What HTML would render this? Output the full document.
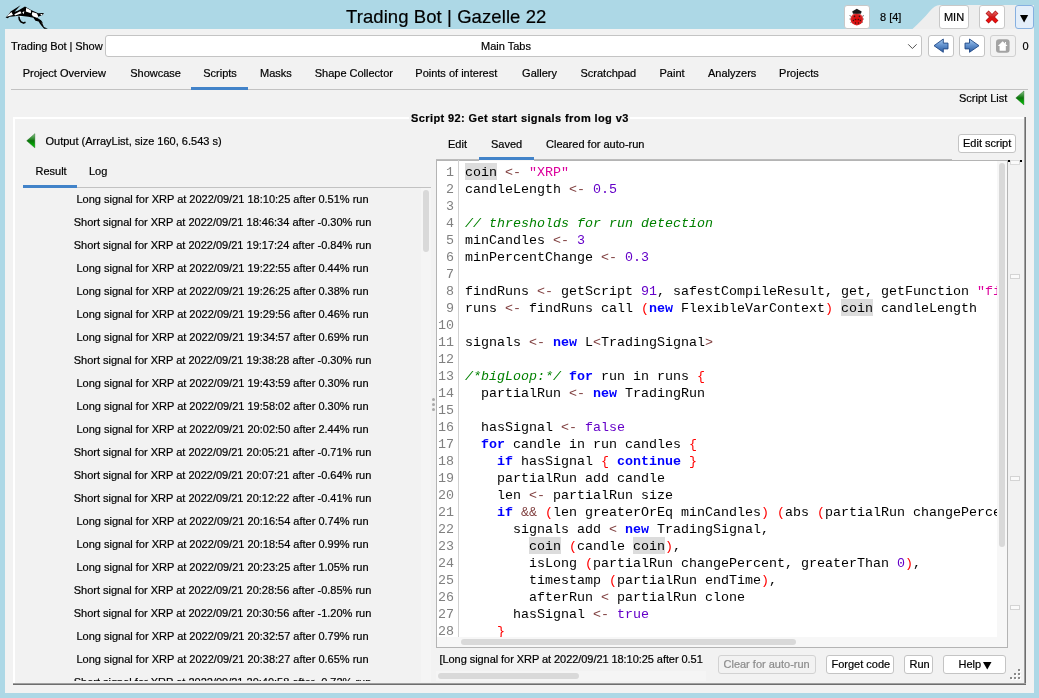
<!DOCTYPE html>
<html><head><meta charset="utf-8"><style>
html,body{margin:0;padding:0;}
body{width:1039px;height:698px;overflow:hidden;position:relative;background:#ADD8E6;font-family:"Liberation Sans",sans-serif;}
body div{position:absolute;}
.t{white-space:pre;-webkit-text-stroke:0.2px currentColor;}
#root{left:0;top:0;width:1039px;height:698px;overflow:hidden;will-change:transform;}
.code{font-family:"Liberation Mono",monospace;font-size:13.333px;line-height:17px;white-space:pre;color:#000;}
.code b{font-weight:700;}
.ln{color:#808080;}

</style></head><body><div id="root">
<svg style="position:absolute;left:3px;top:3px" width="48" height="28" viewBox="0 0 1039 606">
<path d="M56 313 L126 246 L165 182 L380 46 L250 190 L320 168 L476 74 L606 150 L762 222 L885 216 L860 260 L788 286 L762 300 L745 323 L762 338 L823 375 L851 409 L866 470 L886 522 L972 556 L890 556 L838 500 L800 450 L771 400 L702 383 L658 320 L550 298 L420 282 L335 276 L216 290 L140 300 L104 328 Z" fill="#000"/>
<path d="M345 290 Q345 370 385 405 L445 435 L488 418" stroke="#000" stroke-width="34" fill="none" stroke-linejoin="round"/>
<path d="M74 298 L182 197 L216 261 L134 283 Z M246 246 L372 179 L402 223 L261 268 Z M417 201 L462 179 L447 246 Z M503 104 L606 161 L602 222 L494 182 Z M636 195 L736 225 L762 286 L745 323 L645 286 L623 251 Z M805 238 L860 238 L834 277 Z M823 418 L866 470 L850 440 Z M350 298 L402 283 L387 313 Z" fill="#fff"/>
</svg>
<div class="t" style="left:346px;top:8px;font-size:18.5px;line-height:18.5px;color:#000;letter-spacing:0.08px;">Trading Bot | Gazelle 22</div>
<div style="left:844px;top:5px;width:26px;height:24px;background:#fff;border:1px solid #c8c8c8;border-radius:3px;box-sizing:border-box;"></div>
<svg style="position:absolute;left:843px;top:3px" width="30" height="28" viewBox="843 3 30 28">
<defs><radialGradient id="gl" cx="0.5" cy="0.55" r="0.6"><stop offset="0" stop-color="#e00000"/><stop offset="0.7" stop-color="#d82020"/><stop offset="1" stop-color="#f08080"/></radialGradient></defs>
<path d="M849.5 15.5 L851.5 16.5 M849.5 19 L851.5 19 M850.5 22.5 L852 21.5 M864 15.5 L862 16.5 M864 19 L862 19 M863 22.5 L861.5 21.5" stroke="#666" stroke-width="0.9"/>
<ellipse cx="856.8" cy="19.2" rx="6.3" ry="6.2" fill="url(#gl)"/>
<path d="M852.2 11.6 L856.8 8.8 L861.7 11.6 L860.9 13.8 L853 13.8 Z" fill="#1a1a1a"/>
<g fill="#3a1010"><circle cx="854.5" cy="16.4" r="0.8"/><circle cx="859.4" cy="16.4" r="0.8"/><circle cx="855.5" cy="19.5" r="0.8"/><circle cx="858.4" cy="19.5" r="0.8"/><circle cx="853.4" cy="20.5" r="0.7"/><circle cx="860.4" cy="20.5" r="0.7"/><circle cx="855.5" cy="23" r="0.7"/><circle cx="858.4" cy="23" r="0.7"/></g>
</svg>
<div class="t" style="left:880px;top:12px;font-size:11px;line-height:11px;color:#000;">8 [4]</div>
<svg style="position:absolute;left:0;top:0" width="1039" height="30"><path d="M912.5 29 C919 23 925 17 929.5 11.5 C933 7.5 936 5 940 5 L1034 5 L1034 29 Z" fill="#eeeeee"/></svg>
<div style="left:939px;top:5px;width:30px;height:24px;background:#fff;border:1px solid #c8c8c8;border-radius:3px;box-sizing:border-box;"></div>
<div class="t" style="left:954px;top:12px;font-size:11px;line-height:11px;color:#000;transform:translateX(-50%);">MIN</div>
<div style="left:979px;top:5px;width:26px;height:24px;background:#fff;border:1px solid #c8c8c8;border-radius:3px;box-sizing:border-box;"></div>
<svg style="position:absolute;left:977px;top:3px" width="30" height="28" viewBox="977 3 30 28">
<defs><linearGradient id="gx" gradientUnits="userSpaceOnUse" x1="0" y1="11" x2="0" y2="23"><stop offset="0" stop-color="#e87070"/><stop offset="0.5" stop-color="#d01818"/><stop offset="1" stop-color="#ff0808"/></linearGradient></defs>
<path d="M988.6 13.6 L995.4 20.4 M995.4 13.6 L988.6 20.4" stroke="#b01010" stroke-width="4.3" stroke-linecap="square"/>
<path d="M988.6 13.6 L995.4 20.4 M995.4 13.6 L988.6 20.4" stroke="url(#gx)" stroke-width="3" stroke-linecap="square"/>
</svg>
<div style="left:1015px;top:5px;width:19px;height:24px;background:#e3eefa;border:1px solid #86b0e0;border-radius:3px;box-sizing:border-box;"></div>
<svg style="position:absolute;left:1019.5px;top:14.5px" width="9" height="8"><path d="M0 0 L8.2 0 L4.1 7.5 Z" fill="#000"/></svg>
<div style="left:5px;top:29px;width:1029px;height:664px;background:#F2F2F2;"></div>
<div class="t" style="left:11px;top:41px;font-size:11px;line-height:11px;color:#000;letter-spacing:-0.08px;">Trading Bot | Show</div>
<div style="left:105px;top:35px;width:817px;height:22px;background:#fff;border:1px solid #c4c4c4;border-radius:3px;box-sizing:border-box;"></div>
<div class="t" style="left:481px;top:41px;font-size:11px;line-height:11px;color:#000;">Main Tabs</div>
<svg style="position:absolute;left:907px;top:42px" width="12" height="8"><path d="M1.2 2.3 L5.4 6.5 L9.6 2.3" stroke="#505050" stroke-width="1" fill="none"/></svg>
<div style="left:928px;top:35px;width:26px;height:22px;background:#fff;border:1px solid #c4c4c4;border-radius:3px;box-sizing:border-box;"></div>
<div style="left:959px;top:35px;width:26px;height:22px;background:#fff;border:1px solid #c4c4c4;border-radius:3px;box-sizing:border-box;"></div>
<div style="left:990px;top:35px;width:26px;height:22px;background:#f2f2f2;border:1px solid #d0d0d0;border-radius:3px;box-sizing:border-box;"></div>
<svg style="position:absolute;left:925px;top:32px" width="95" height="28" viewBox="925 32 95 28">
<defs><linearGradient id="ga" x1="0" y1="0" x2="0" y2="1"><stop offset="0" stop-color="#a9cdf2"/><stop offset="0.5" stop-color="#5f8fcc"/><stop offset="1" stop-color="#2b5a9e"/></linearGradient></defs>
<path d="M934 45.7 L943.3 39 L943.3 43.1 L948 43.1 L948 48.9 L943.3 48.9 L943.3 52.3 Z" fill="url(#ga)" stroke="#1f4786" stroke-width="0.9" stroke-linejoin="round"/>
<path d="M979 45.7 L969.5 39 L969.5 43.1 L965 43.1 L965 48.9 L969.5 48.9 L969.5 52.3 Z" fill="url(#ga)" stroke="#1f4786" stroke-width="0.9" stroke-linejoin="round"/>
<rect x="996" y="39.3" width="13.6" height="13.4" rx="3" fill="#a3a3a3"/>
<path d="M1002.7 41.3 L1007.6 46 L1005.8 46 L1005.8 50.8 L999.6 50.8 L999.6 46 L997.8 46 Z M1005 42 L1006 42 L1006 44.2 L1005 43.3 Z" fill="#fff"/>
</svg>
<div class="t" style="left:1022.5px;top:41px;font-size:11px;line-height:11px;color:#000;">0</div>
<div class="t" style="left:22.7px;top:68px;font-size:11px;line-height:11px;color:#000;">Project Overview</div>
<div class="t" style="left:130.2px;top:68px;font-size:11px;line-height:11px;color:#000;">Showcase</div>
<div class="t" style="left:203.2px;top:68px;font-size:11px;line-height:11px;color:#000;">Scripts</div>
<div class="t" style="left:260.1px;top:68px;font-size:11px;line-height:11px;color:#000;">Masks</div>
<div class="t" style="left:314.7px;top:68px;font-size:11px;line-height:11px;color:#000;">Shape Collector</div>
<div class="t" style="left:415.3px;top:68px;font-size:11px;line-height:11px;color:#000;">Points of interest</div>
<div class="t" style="left:522.1px;top:68px;font-size:11px;line-height:11px;color:#000;">Gallery</div>
<div class="t" style="left:580.5px;top:68px;font-size:11px;line-height:11px;color:#000;">Scratchpad</div>
<div class="t" style="left:659.5px;top:68px;font-size:11px;line-height:11px;color:#000;">Paint</div>
<div class="t" style="left:708px;top:68px;font-size:11px;line-height:11px;color:#000;">Analyzers</div>
<div class="t" style="left:779.1px;top:68px;font-size:11px;line-height:11px;color:#000;">Projects</div>
<div style="left:11px;top:89px;width:1017px;height:1px;background:#c2c2c2;"></div>
<div style="left:191px;top:87px;width:57px;height:3px;background:#4283c9;"></div>
<div class="t" style="left:959px;top:93px;font-size:11px;line-height:11px;color:#000;">Script List</div>
<svg style="position:absolute;left:1010px;top:86px" width="20" height="24" viewBox="1010 86 20 24">
<defs><linearGradient id="gg" x1="0" y1="0" x2="0" y2="1"><stop offset="0" stop-color="#8cc88c"/><stop offset="0.5" stop-color="#0b740b"/><stop offset="1" stop-color="#00d000"/></linearGradient></defs>
<path d="M1015.8 97.9 L1023.9 91 L1023.9 104.9 Z" fill="url(#gg)" stroke="#0a600a" stroke-width="0.4"/></svg>
<div style="left:13px;top:117px;width:1013px;height:2px;background:#fff;"></div>
<div style="left:13px;top:117px;width:2px;height:568px;background:#fff;"></div>
<div style="left:1024px;top:117px;width:1px;height:568px;background:#a0a0a0;"></div>
<div style="left:1025px;top:117px;width:1px;height:568px;background:#6e6e6e;"></div>
<div style="left:13px;top:683px;width:1013px;height:1px;background:#a0a0a0;"></div>
<div style="left:13px;top:684px;width:1013px;height:1px;background:#6e6e6e;"></div>
<div style="left:1024px;top:683px;width:1px;height:1px;background:#a0a0a0;"></div>
<div style="left:409px;top:115px;width:221px;height:6px;background:#F2F2F2;"></div>
<div class="t" style="left:411px;top:113px;font-size:11px;line-height:11px;color:#000;font-weight:700;letter-spacing:0.4px;">Script 92: Get start signals from log v3</div>
<svg style="position:absolute;left:22px;top:130px" width="18" height="22" viewBox="22 130 18 22">
<path d="M26.7 140.8 L34.8 133.7 L34.8 147.8 Z" fill="url(#gg)" stroke="#0a600a" stroke-width="0.4"/></svg>
<div class="t" style="left:45.5px;top:136px;font-size:11px;line-height:11px;color:#000;">Output (ArrayList, size 160, 6.543 s)</div>
<div class="t" style="left:35.5px;top:166px;font-size:11px;line-height:11px;color:#000;">Result</div>
<div class="t" style="left:89px;top:166px;font-size:11px;line-height:11px;color:#000;">Log</div>
<div style="left:23px;top:187px;width:408px;height:1px;background:#c2c2c2;"></div>
<div style="left:23px;top:185px;width:54px;height:3px;background:#4283c9;"></div>
<div style="left:15px;top:188px;width:406px;height:493px;overflow:hidden">
<div class="t" style="left:0;top:6px;width:415px;text-align:center;font-size:11px;line-height:11px">Long signal for XRP at 2022/09/21 18:10:25 after 0.51% run</div>
<div class="t" style="left:0;top:29px;width:415px;text-align:center;font-size:11px;line-height:11px">Short signal for XRP at 2022/09/21 18:46:34 after -0.30% run</div>
<div class="t" style="left:0;top:52px;width:415px;text-align:center;font-size:11px;line-height:11px">Short signal for XRP at 2022/09/21 19:17:24 after -0.84% run</div>
<div class="t" style="left:0;top:75px;width:415px;text-align:center;font-size:11px;line-height:11px">Long signal for XRP at 2022/09/21 19:22:55 after 0.44% run</div>
<div class="t" style="left:0;top:98px;width:415px;text-align:center;font-size:11px;line-height:11px">Long signal for XRP at 2022/09/21 19:26:25 after 0.38% run</div>
<div class="t" style="left:0;top:121px;width:415px;text-align:center;font-size:11px;line-height:11px">Long signal for XRP at 2022/09/21 19:29:56 after 0.46% run</div>
<div class="t" style="left:0;top:144px;width:415px;text-align:center;font-size:11px;line-height:11px">Long signal for XRP at 2022/09/21 19:34:57 after 0.69% run</div>
<div class="t" style="left:0;top:167px;width:415px;text-align:center;font-size:11px;line-height:11px">Short signal for XRP at 2022/09/21 19:38:28 after -0.30% run</div>
<div class="t" style="left:0;top:190px;width:415px;text-align:center;font-size:11px;line-height:11px">Long signal for XRP at 2022/09/21 19:43:59 after 0.30% run</div>
<div class="t" style="left:0;top:213px;width:415px;text-align:center;font-size:11px;line-height:11px">Long signal for XRP at 2022/09/21 19:58:02 after 0.30% run</div>
<div class="t" style="left:0;top:236px;width:415px;text-align:center;font-size:11px;line-height:11px">Long signal for XRP at 2022/09/21 20:02:50 after 2.44% run</div>
<div class="t" style="left:0;top:259px;width:415px;text-align:center;font-size:11px;line-height:11px">Short signal for XRP at 2022/09/21 20:05:21 after -0.71% run</div>
<div class="t" style="left:0;top:282px;width:415px;text-align:center;font-size:11px;line-height:11px">Short signal for XRP at 2022/09/21 20:07:21 after -0.64% run</div>
<div class="t" style="left:0;top:305px;width:415px;text-align:center;font-size:11px;line-height:11px">Short signal for XRP at 2022/09/21 20:12:22 after -0.41% run</div>
<div class="t" style="left:0;top:328px;width:415px;text-align:center;font-size:11px;line-height:11px">Long signal for XRP at 2022/09/21 20:16:54 after 0.74% run</div>
<div class="t" style="left:0;top:351px;width:415px;text-align:center;font-size:11px;line-height:11px">Long signal for XRP at 2022/09/21 20:18:54 after 0.99% run</div>
<div class="t" style="left:0;top:374px;width:415px;text-align:center;font-size:11px;line-height:11px">Long signal for XRP at 2022/09/21 20:23:25 after 1.05% run</div>
<div class="t" style="left:0;top:397px;width:415px;text-align:center;font-size:11px;line-height:11px">Short signal for XRP at 2022/09/21 20:28:56 after -0.85% run</div>
<div class="t" style="left:0;top:420px;width:415px;text-align:center;font-size:11px;line-height:11px">Short signal for XRP at 2022/09/21 20:30:56 after -1.20% run</div>
<div class="t" style="left:0;top:443px;width:415px;text-align:center;font-size:11px;line-height:11px">Long signal for XRP at 2022/09/21 20:32:57 after 0.79% run</div>
<div class="t" style="left:0;top:466px;width:415px;text-align:center;font-size:11px;line-height:11px">Long signal for XRP at 2022/09/21 20:38:27 after 0.65% run</div>
<div class="t" style="left:0;top:489px;width:415px;text-align:center;font-size:11px;line-height:11px">Short signal for XRP at 2022/09/21 20:40:58 after -0.72% run</div>
</div>
<div style="left:421px;top:188px;width:10px;height:494px;background:#f5f5f5;"></div>
<div style="left:423px;top:190px;width:6px;height:62px;background:#d9d9d9;border-radius:3px;"></div>
<div style="left:431.5px;top:398px;width:3px;height:3px;background:#a8a8a8;border-radius:50%;"></div>
<div style="left:431.5px;top:403px;width:3px;height:3px;background:#a8a8a8;border-radius:50%;"></div>
<div style="left:431.5px;top:408px;width:3px;height:3px;background:#a8a8a8;border-radius:50%;"></div>
<div class="t" style="left:448px;top:139px;font-size:11px;line-height:11px;color:#000;">Edit</div>
<div class="t" style="left:491px;top:139px;font-size:11px;line-height:11px;color:#000;">Saved</div>
<div class="t" style="left:546px;top:139px;font-size:11px;line-height:11px;color:#000;">Cleared for auto-run</div>
<div style="left:958px;top:134px;width:58px;height:19px;background:#fff;border:1px solid #c4c4c4;border-radius:3px;box-sizing:border-box;"></div>
<div class="t" style="left:963px;top:138px;font-size:11px;line-height:11px;color:#000;">Edit script</div>
<div style="left:436px;top:160px;width:572px;height:488px;background:#fff;border:1px solid #b4b4b4;box-sizing:border-box;"></div>
<div style="left:436px;top:159px;width:516px;height:1px;background:#bcbcbc;"></div>
<div style="left:479px;top:157px;width:55px;height:3px;background:#4283c9;"></div>
<div style="left:479px;top:160px;width:55px;height:1px;background:#f6f6f6;"></div>
<div style="left:458px;top:160px;width:1px;height:477px;background:#d0d0d0;"></div>
<div style="left:437px;top:637px;width:570px;height:10px;background:#f7f7f7;"></div>
<div style="left:997px;top:161px;width:10px;height:476px;background:#f7f7f7;"></div>
<div style="left:461px;top:639px;width:335px;height:6px;background:#d9d9d9;border-radius:3px;"></div>
<div style="left:999px;top:163px;width:6px;height:384px;background:#d9d9d9;border-radius:3px;"></div>
<div style="left:1008px;top:160px;width:2px;height:2px;background:#000;"></div>
<div style="left:1020px;top:160px;width:2px;height:2px;background:#000;"></div>
<div style="left:1010px;top:160px;width:10px;height:5px;background:#fafafa;border:1px solid #dadada;border-top:none;box-sizing:border-box;"></div>
<div style="left:1010px;top:160px;width:10px;height:1px;background:#dcdcdc;"></div>
<div style="left:1010px;top:274px;width:10px;height:5px;background:#fafafa;border:1px solid #d4d4d4;box-sizing:border-box;"></div>
<div style="left:1010px;top:476px;width:10px;height:5px;background:#fafafa;border:1px solid #d4d4d4;box-sizing:border-box;"></div>
<div style="left:1010px;top:605px;width:10px;height:5px;background:#fafafa;border:1px solid #d4d4d4;box-sizing:border-box;"></div>
<div style="left:459px;top:160px;width:538px;height:477px;overflow:hidden">
<div style="left:6px;top:3px;width:32px;height:17px;background:#dcdcdc"></div>
<div style="left:382px;top:139px;width:32px;height:17px;background:#dcdcdc"></div>
<div style="left:70px;top:377px;width:32px;height:17px;background:#dcdcdc"></div>
<div style="left:174px;top:377px;width:32px;height:17px;background:#dcdcdc"></div>
<div class="code" style="left:6px;top:4px">coin <span style="color:#804040">&lt;-</span> <span style="color:#DC009C">&quot;XRP&quot;</span></div>
<div class="code" style="left:6px;top:21px">candleLength <span style="color:#804040">&lt;-</span> <span style="color:#6400C8">0.5</span></div>
<div class="code" style="left:6px;top:38px"></div>
<div class="code" style="left:6px;top:55px"><i style="color:#008000">// thresholds for run detection</i></div>
<div class="code" style="left:6px;top:72px">minCandles <span style="color:#804040">&lt;-</span> <span style="color:#6400C8">3</span></div>
<div class="code" style="left:6px;top:89px">minPercentChange <span style="color:#804040">&lt;-</span> <span style="color:#6400C8">0.3</span></div>
<div class="code" style="left:6px;top:106px"></div>
<div class="code" style="left:6px;top:123px">findRuns <span style="color:#804040">&lt;-</span> getScript <span style="color:#6400C8">91</span>, safestCompileResult, get, getFunction <span style="color:#DC009C">&quot;findRuns&quot;</span></div>
<div class="code" style="left:6px;top:140px">runs <span style="color:#804040">&lt;-</span> findRuns call <span style="color:#FF0000">(</span><b style="color:#0000FF">new</b> FlexibleVarContext<span style="color:#FF0000">)</span> coin candleLength</div>
<div class="code" style="left:6px;top:157px"></div>
<div class="code" style="left:6px;top:174px">signals <span style="color:#804040">&lt;-</span> <b style="color:#0000FF">new</b> L<span style="color:#804040">&lt;</span>TradingSignal<span style="color:#804040">&gt;</span></div>
<div class="code" style="left:6px;top:191px"></div>
<div class="code" style="left:6px;top:208px"><i style="color:#008000">/*bigLoop:*/</i> <b style="color:#0000FF">for</b> run in runs <span style="color:#FF0000">{</span></div>
<div class="code" style="left:6px;top:225px">  partialRun <span style="color:#804040">&lt;-</span> <b style="color:#0000FF">new</b> TradingRun</div>
<div class="code" style="left:6px;top:242px"></div>
<div class="code" style="left:6px;top:259px">  hasSignal <span style="color:#804040">&lt;-</span> <span style="color:#6400C8">false</span></div>
<div class="code" style="left:6px;top:276px">  <b style="color:#0000FF">for</b> candle in run candles <span style="color:#FF0000">{</span></div>
<div class="code" style="left:6px;top:293px">    <b style="color:#0000FF">if</b> hasSignal <span style="color:#FF0000">{</span> <b style="color:#0000FF">continue</b> <span style="color:#FF0000">}</span></div>
<div class="code" style="left:6px;top:310px">    partialRun add candle</div>
<div class="code" style="left:6px;top:327px">    len <span style="color:#804040">&lt;-</span> partialRun size</div>
<div class="code" style="left:6px;top:344px">    <b style="color:#0000FF">if</b> <span style="color:#804040">&amp;&amp;</span> <span style="color:#FF0000">(</span>len greaterOrEq minCandles<span style="color:#FF0000">)</span> <span style="color:#FF0000">(</span>abs <span style="color:#FF0000">(</span>partialRun changePercent<span style="color:#FF0000">)</span> greaterOrEq minPercentChange<span style="color:#FF0000">)</span></div>
<div class="code" style="left:6px;top:361px">      signals add <span style="color:#804040">&lt;</span> <b style="color:#0000FF">new</b> TradingSignal,</div>
<div class="code" style="left:6px;top:378px">        coin <span style="color:#FF0000">(</span>candle coin<span style="color:#FF0000">)</span>,</div>
<div class="code" style="left:6px;top:395px">        isLong <span style="color:#FF0000">(</span>partialRun changePercent, greaterThan <span style="color:#6400C8">0</span><span style="color:#FF0000">)</span>,</div>
<div class="code" style="left:6px;top:412px">        timestamp <span style="color:#FF0000">(</span>partialRun endTime<span style="color:#FF0000">)</span>,</div>
<div class="code" style="left:6px;top:429px">        afterRun <span style="color:#804040">&lt;</span> partialRun clone</div>
<div class="code" style="left:6px;top:446px">      hasSignal <span style="color:#804040">&lt;-</span> <span style="color:#6400C8">true</span></div>
<div class="code" style="left:6px;top:463px">    <span style="color:#FF0000">}</span></div>
</div>
<div class="code ln" style="left:437px;top:164px;width:17px;text-align:right">1</div>
<div class="code ln" style="left:437px;top:181px;width:17px;text-align:right">2</div>
<div class="code ln" style="left:437px;top:198px;width:17px;text-align:right">3</div>
<div class="code ln" style="left:437px;top:215px;width:17px;text-align:right">4</div>
<div class="code ln" style="left:437px;top:232px;width:17px;text-align:right">5</div>
<div class="code ln" style="left:437px;top:249px;width:17px;text-align:right">6</div>
<div class="code ln" style="left:437px;top:266px;width:17px;text-align:right">7</div>
<div class="code ln" style="left:437px;top:283px;width:17px;text-align:right">8</div>
<div class="code ln" style="left:437px;top:300px;width:17px;text-align:right">9</div>
<div class="code ln" style="left:437px;top:317px;width:17px;text-align:right">10</div>
<div class="code ln" style="left:437px;top:334px;width:17px;text-align:right">11</div>
<div class="code ln" style="left:437px;top:351px;width:17px;text-align:right">12</div>
<div class="code ln" style="left:437px;top:368px;width:17px;text-align:right">13</div>
<div class="code ln" style="left:437px;top:385px;width:17px;text-align:right">14</div>
<div class="code ln" style="left:437px;top:402px;width:17px;text-align:right">15</div>
<div class="code ln" style="left:437px;top:419px;width:17px;text-align:right">16</div>
<div class="code ln" style="left:437px;top:436px;width:17px;text-align:right">17</div>
<div class="code ln" style="left:437px;top:453px;width:17px;text-align:right">18</div>
<div class="code ln" style="left:437px;top:470px;width:17px;text-align:right">19</div>
<div class="code ln" style="left:437px;top:487px;width:17px;text-align:right">20</div>
<div class="code ln" style="left:437px;top:504px;width:17px;text-align:right">21</div>
<div class="code ln" style="left:437px;top:521px;width:17px;text-align:right">22</div>
<div class="code ln" style="left:437px;top:538px;width:17px;text-align:right">23</div>
<div class="code ln" style="left:437px;top:555px;width:17px;text-align:right">24</div>
<div class="code ln" style="left:437px;top:572px;width:17px;text-align:right">25</div>
<div class="code ln" style="left:437px;top:589px;width:17px;text-align:right">26</div>
<div class="code ln" style="left:437px;top:606px;width:17px;text-align:right">27</div>
<div class="code ln" style="left:437px;top:623px;width:17px;text-align:right">28</div>
<div style="left:436px;top:648px;width:267px;height:22px;overflow:hidden">
<div class="t" style="left:3.5px;top:6px;font-size:11px;line-height:11px;color:#000;letter-spacing:-0.06px;">[Long signal for XRP at 2022/09/21 18:10:25 after 0.51% run]</div>
</div>
<div style="left:436px;top:671px;width:270px;height:10px;background:#f5f5f5;"></div>
<div style="left:438px;top:673px;width:141px;height:6px;background:#d9d9d9;border-radius:3px;"></div>
<div style="left:718px;top:655px;width:98px;height:19px;background:#f2f2f2;border:1px solid #d2d2d2;border-radius:3px;box-sizing:border-box;"></div>
<div class="t" style="left:723.5px;top:659px;font-size:11px;line-height:11px;color:#8c8c8c;">Clear for auto-run</div>
<div style="left:826px;top:655px;width:68px;height:19px;background:#fff;border:1px solid #c4c4c4;border-radius:3px;box-sizing:border-box;"></div>
<div class="t" style="left:831.5px;top:659px;font-size:11px;line-height:11px;color:#000;">Forget code</div>
<div style="left:904px;top:655px;width:29px;height:19px;background:#fff;border:1px solid #c4c4c4;border-radius:3px;box-sizing:border-box;"></div>
<div class="t" style="left:909.5px;top:659px;font-size:11px;line-height:11px;color:#000;">Run</div>
<div style="left:943px;top:655px;width:63px;height:19px;background:#fff;border:1px solid #c4c4c4;border-radius:3px;box-sizing:border-box;"></div>
<div class="t" style="left:958.5px;top:659px;font-size:11px;line-height:11px;color:#000;">Help</div>
<svg style="position:absolute;left:982.5px;top:661.5px" width="9" height="8"><path d="M0 0 L8.5 0 L4.25 7.5 Z" fill="#000"/></svg>
<div style="left:1019px;top:670px;width:2px;height:2px;background:#fff;"></div>
<div style="left:1018px;top:669px;width:2px;height:2px;background:#8a8a8a;"></div>
<div style="left:1015px;top:674px;width:2px;height:2px;background:#fff;"></div>
<div style="left:1014px;top:673px;width:2px;height:2px;background:#8a8a8a;"></div>
<div style="left:1019px;top:674px;width:2px;height:2px;background:#fff;"></div>
<div style="left:1018px;top:673px;width:2px;height:2px;background:#8a8a8a;"></div>
<div style="left:1011px;top:678px;width:2px;height:2px;background:#fff;"></div>
<div style="left:1010px;top:677px;width:2px;height:2px;background:#8a8a8a;"></div>
<div style="left:1015px;top:678px;width:2px;height:2px;background:#fff;"></div>
<div style="left:1014px;top:677px;width:2px;height:2px;background:#8a8a8a;"></div>
<div style="left:1019px;top:678px;width:2px;height:2px;background:#fff;"></div>
<div style="left:1018px;top:677px;width:2px;height:2px;background:#8a8a8a;"></div>
</div></body></html>
